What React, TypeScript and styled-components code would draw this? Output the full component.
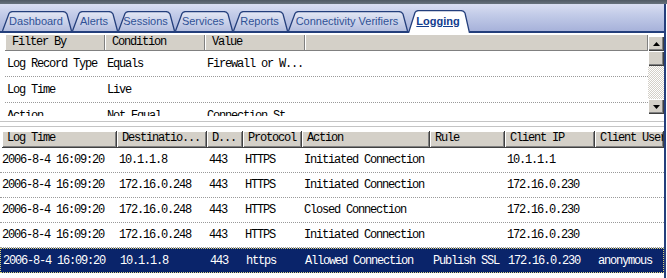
import React from 'react';
import styled, { createGlobalStyle } from 'styled-components';

const NAVY = '#243f7c';
const GRID = '117px 90px 36px 59px 128px 75px 90px 1fr';

interface TabDef {
    label: string;
    width: number;
    active?: boolean;
}

const tabs: TabDef[] = [
    { label: 'Dashboard', width: 70 },
    { label: 'Alerts', width: 46 },
    { label: 'Sessions', width: 57 },
    { label: 'Services', width: 58 },
    { label: 'Reports', width: 55 },
    { label: 'Connectivity Verifiers', width: 120 },
    { label: 'Logging', width: 62, active: true },
];

const filters = [
    ['Log Record Type', 'Equals', 'Firewall or W...'],
    ['Log Time', 'Live', ''],
    ['Action', 'Not Equal', 'Connection St...'],
];

const columns = ['Log Time', 'Destinatio...', 'D...', 'Protocol', 'Action', 'Rule', 'Client IP', 'Client User'];

const logRows = [
    ['2006-8-4 16:09:20', '10.1.1.8', '443', 'HTTPS', 'Initiated Connection', '', '10.1.1.1', ''],
    ['2006-8-4 16:09:20', '172.16.0.248', '443', 'HTTPS', 'Initiated Connection', '', '172.16.0.230', ''],
    ['2006-8-4 16:09:20', '172.16.0.248', '443', 'HTTPS', 'Closed Connection', '', '172.16.0.230', ''],
    ['2006-8-4 16:09:20', '172.16.0.248', '443', 'HTTPS', 'Initiated Connection', '', '172.16.0.230', ''],
    ['2006-8-4 16:09:20', '10.1.1.8', '443', 'https', 'Allowed Connection', 'Publish SSL', '172.16.0.230', 'anonymous'],
];

const SELECTED = 4;

const TabShape = ({ width, active }: { width: number; active?: boolean }) => {
    const h = active ? 23 : 20;
    const w = width;
    const d = `M0.5 ${h} L7 2.5 Q8 0.6 10.5 0.6 L${w - 9} 0.6 Q${w - 6.5} 0.6 ${w - 5} 3 L${w - 0.5} ${h}`;
    return (
        <TabSvg width={w} height={h} viewBox={`0 0 ${w} ${h}`}>
            <defs>
                <linearGradient id="tabFill" x1="0" y1="0" x2="0" y2="1">
                    <stop offset="0" stopColor="#e4e8f5" />
                    <stop offset="1" stopColor="#b4bedf" />
                </linearGradient>
            </defs>
            <path d={d} fill={active ? '#ffffff' : 'url(#tabFill)'} stroke={NAVY} strokeWidth="1.3" />
        </TabSvg>
    );
};

const ArrowUp = () => (
    <svg width="7" height="4" viewBox="0 0 7 4"><path d="M3.5 0 L7 4 L0 4 Z" fill="#000" /></svg>
);

const ArrowDown = () => (
    <svg width="7" height="4" viewBox="0 0 7 4"><path d="M0 0 L7 0 L3.5 4 Z" fill="#000" /></svg>
);

const App = () => {
    return (
        <>
            <GlobalStyle />
            <Page>
                <TopBand />
                <Frame>
                    <TabStrip>
                        {tabs.map((t) => (
                            <Tab key={t.label} $width={t.width} $active={t.active}>
                                <TabShape width={t.width} active={t.active} />
                                <TabLabel $active={t.active}>{t.label}</TabLabel>
                            </Tab>
                        ))}
                    </TabStrip>
                    <Body>
                        <FilterPanel>
                            <FilterList>
                                <FilterHeader>
                                    <FilterHeadCell>Filter By</FilterHeadCell>
                                    <FilterHeadCell>Condition</FilterHeadCell>
                                    <FilterHeadCell>Value</FilterHeadCell>
                                    <FilterHeadCell />
                                </FilterHeader>
                                {filters.map((f) => (
                                    <FilterRow key={f[0]}>
                                        {f.map((v, i) => (
                                            <Cell key={i}>{v}</Cell>
                                        ))}
                                        <Cell />
                                    </FilterRow>
                                ))}
                            </FilterList>
                            <Scrollbar>
                                <ScrollButton><ArrowUp /></ScrollButton>
                                <Thumb />
                                <Track />
                                <ScrollButton><ArrowDown /></ScrollButton>
                            </Scrollbar>
                        </FilterPanel>
                        <Splitter />
                        <LogTable>
                            <LogHeader>
                                {columns.map((c, i) => (
                                    <HeadCell key={c} $first={i === 0}>{c}</HeadCell>
                                ))}
                            </LogHeader>
                            {logRows.map((r, i) => (
                                <LogRow key={i} $selected={i === SELECTED}>
                                    {r.map((v, j) => (
                                        <Cell key={j}>{v}</Cell>
                                    ))}
                                </LogRow>
                            ))}
                        </LogTable>
                    </Body>
                </Frame>
            </Page>
        </>
    );
}

export default App;

const GlobalStyle = createGlobalStyle`
    html, body {
        margin: 0;
        padding: 0;
        background: #ffffff;
        overflow: hidden;
    }
`;

const Page = styled.div`
    width: 667px;
    height: 278px;
    display: flex;
    flex-direction: column;
    overflow: hidden;
    background: #ffffff;
`;

const TopBand = styled.div`
    height: 4px;
    flex: none;
    background: linear-gradient(#4f5962, #67727c);
`;

const Frame = styled.div`
    width: 664px;
    flex: 1;
    display: flex;
    flex-direction: column;
    border-right: 2px solid ${NAVY};
    min-height: 0;
`;

const TabStrip = styled.div`
    height: 27px;
    flex: none;
    display: flex;
    align-items: flex-end;
    padding-left: 2px;
    background: linear-gradient(#d9def1, #c2cbe8 40%, #a7b2da);
    border-bottom: 2px solid ${NAVY};
`;

const Tab = styled.div<{ $width: number; $active?: boolean }>`
    position: relative;
    width: ${(p) => p.$width}px;
    height: ${(p) => (p.$active ? 23 : 20)}px;
    margin-bottom: ${(p) => (p.$active ? -2 : 0)}px;
    display: flex;
    align-items: ${(p) => (p.$active ? 'flex-start' : 'center')};
    justify-content: center;
    padding-right: 2px;
    box-sizing: border-box;
    flex: none;
`;

const TabSvg = styled.svg`
    position: absolute;
    left: 0;
    top: 0;
`;

const TabLabel = styled.span<{ $active?: boolean }>`
    position: relative;
    font-family: "Liberation Sans", Arial, sans-serif;
    font-size: 11px;
    line-height: 13px;
    margin-top: ${(p) => (p.$active ? '5px' : '0')};
    color: ${(p) => (p.$active ? '#123c8e' : '#2f5196')};
    font-weight: ${(p) => (p.$active ? 'bold' : 'normal')};
    text-decoration: ${(p) => (p.$active ? 'underline' : 'none')};
    white-space: nowrap;
`;

const Body = styled.div`
    flex: 1;
    display: flex;
    flex-direction: column;
    background: #ffffff;
    min-height: 0;
    font-family: "Liberation Mono", "Courier New", monospace;
    font-size: 12px;
    letter-spacing: -1.2px;
    color: #000000;
`;

const FilterPanel = styled.div`
    height: 81px;
    flex: none;
    display: flex;
    margin: 2px 0 1px 5px;
`;

const FilterList = styled.div`
    flex: 1;
    overflow: hidden;
`;

const FilterHeader = styled.div`
    display: grid;
    grid-template-columns: 100px 100px 100px 1fr;
    height: 15px;
    background: #d4d0c8;
    border-bottom: 1px solid #808080;
`;

const FilterHeadCell = styled.div`
    padding-left: 7px;
    line-height: 15px;
    border-right: 1px solid #808080;
    box-shadow: inset 1px 0 #ffffff;
    white-space: nowrap;
    overflow: hidden;
`;

const FilterRow = styled.div`
    display: grid;
    grid-template-columns: 100px 100px 100px 1fr;
    height: 25px;
    align-items: center;
    border-bottom: 1px dotted #9a9a9a;
`;

const Cell = styled.div`
    padding-left: 2px;
    white-space: nowrap;
    overflow: hidden;
`;

const Scrollbar = styled.div`
    width: 16px;
    flex: none;
    display: flex;
    flex-direction: column;
    margin: 1px 0 2px;
`;

const raised = `
    background: #d4d0c8;
    box-shadow: inset 1px 1px #ffffff, inset -1px -1px #404040, inset -2px -2px #808080;
`;

const ScrollButton = styled.div`
    ${raised}
    height: 15px;
    flex: none;
    display: flex;
    align-items: center;
    justify-content: center;
`;

const Thumb = styled.div`
    ${raised}
    height: 15px;
    flex: none;
`;

const Track = styled.div`
    flex: 1;
    background: repeating-conic-gradient(#d4d0c8 0 25%, #ffffff 0 50%) 0 0 / 2px 2px;
`;

const Splitter = styled.div`
    height: 4px;
    flex: none;
    margin: 4px 0 4px;
    border-top: 1px solid #c4c4c4;
    border-bottom: 1px solid #c4c4c4;
`;

const LogTable = styled.div`
    flex: 1;
    overflow: hidden;
`;

const LogHeader = styled.div`
    display: grid;
    grid-template-columns: ${GRID};
    height: 17px;
`;

const HeadCell = styled.div<{ $first?: boolean }>`
    margin-left: ${(p) => (p.$first ? 2 : 0)}px;
    padding-left: 5px;
    line-height: 15px;
    background: #d4d0c8;
    box-shadow: inset 1px 1px #ffffff, inset -1px -1px #808080;
    border-right: 1px solid #404040;
    border-bottom: 1px solid #404040;
    white-space: nowrap;
    overflow: hidden;
`;

const LogRow = styled.div<{ $selected?: boolean }>`
    display: grid;
    grid-template-columns: ${GRID};
    height: 25px;
    box-sizing: border-box;
    align-items: center;
    background: ${(p) => (p.$selected ? '#0a246a' : 'transparent')};
    color: ${(p) => (p.$selected ? '#ffffff' : '#000000')};
    border: ${(p) => (p.$selected ? '1px dotted #d8cf7a' : 'none')};
    border-bottom: ${(p) => (p.$selected ? '1px dotted #d8cf7a' : '1px dotted #9a9a9a')};
`;
